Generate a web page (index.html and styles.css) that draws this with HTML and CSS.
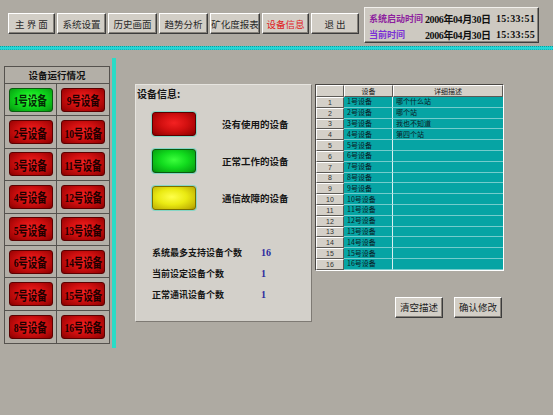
FILE: index.html
```html
<!DOCTYPE html>
<html lang="zh">
<head>
<meta charset="utf-8">
<title>设备信息</title>
<link rel="stylesheet" href="styles.css">
</head>
<body>
<div class="screen">
  <header class="topbar">
    <nav class="menu">
      <button class="mbtn w47">主 界 面</button>
      <button class="mbtn w49">系统设置</button>
      <button class="mbtn w49">历史画面</button>
      <button class="mbtn w49">趋势分析</button>
      <button class="mbtn w50">矿化度报表</button>
      <button class="mbtn w47 active">设备信息</button>
      <button class="mbtn w48">退 出</button>
    </nav>
    <div class="timebox">
      <div class="trow"><span class="tlabel start">系统启动时间</span><span class="tdate">2006年04月30日</span><span class="ttime">15:33:51</span></div>
      <div class="trow"><span class="tlabel now">当前时间</span><span class="tdate">2006年04月30日</span><span class="ttime">15:33:55</span></div>
    </div>
  </header>
  <div class="hline"></div>
  <main class="main">
    <section class="devpanel">
      <div class="devtitle">设备运行情况</div>
      <div class="devgrid">
        <div class="cell"><div class="dev green"><span class="lbl">1号设备</span></div></div>
        <div class="cell"><div class="dev red"><span class="lbl">9号设备</span></div></div>
        <div class="cell"><div class="dev red"><span class="lbl">2号设备</span></div></div>
        <div class="cell"><div class="dev red"><span class="lbl">10号设备</span></div></div>
        <div class="cell"><div class="dev red"><span class="lbl">3号设备</span></div></div>
        <div class="cell"><div class="dev red"><span class="lbl">11号设备</span></div></div>
        <div class="cell"><div class="dev red"><span class="lbl">4号设备</span></div></div>
        <div class="cell"><div class="dev red"><span class="lbl">12号设备</span></div></div>
        <div class="cell"><div class="dev red"><span class="lbl">5号设备</span></div></div>
        <div class="cell"><div class="dev red"><span class="lbl">13号设备</span></div></div>
        <div class="cell"><div class="dev red"><span class="lbl">6号设备</span></div></div>
        <div class="cell"><div class="dev red"><span class="lbl">14号设备</span></div></div>
        <div class="cell"><div class="dev red"><span class="lbl">7号设备</span></div></div>
        <div class="cell"><div class="dev red"><span class="lbl">15号设备</span></div></div>
        <div class="cell"><div class="dev red"><span class="lbl">8号设备</span></div></div>
        <div class="cell"><div class="dev red"><span class="lbl">16号设备</span></div></div>
      </div>
    </section>
    <div class="vline"></div>
    <section class="info">
      <div class="infotitle">设备信息:</div>
      <div class="legend">
        <div class="lrow"><div class="ind red"></div><span class="ltext">没有使用的设备</span></div>
        <div class="lrow"><div class="ind green"></div><span class="ltext">正常工作的设备</span></div>
        <div class="lrow"><div class="ind yellow"></div><span class="ltext">通信故障的设备</span></div>
      </div>
      <div class="stats">
        <div class="srow"><span class="slabel">系统最多支持设备个数</span><span class="sval">16</span></div>
        <div class="srow"><span class="slabel">当前设定设备个数</span><span class="sval">1</span></div>
        <div class="srow"><span class="slabel">正常通讯设备个数</span><span class="sval">1</span></div>
      </div>
    </section>
    <section class="right">
      <div class="tbl">
        <div class="th corner"></div><div class="th">设备</div><div class="th">详细描述</div>
        <div class="rh">1</div><div class="td dcol">1号设备</div><div class="td">哪个什么站</div>
        <div class="rh">2</div><div class="td dcol">2号设备</div><div class="td">哪个站</div>
        <div class="rh">3</div><div class="td dcol">3号设备</div><div class="td">我也不知道</div>
        <div class="rh">4</div><div class="td dcol">4号设备</div><div class="td">第四个站</div>
        <div class="rh">5</div><div class="td dcol">5号设备</div><div class="td"></div>
        <div class="rh">6</div><div class="td dcol">6号设备</div><div class="td"></div>
        <div class="rh">7</div><div class="td dcol">7号设备</div><div class="td"></div>
        <div class="rh">8</div><div class="td dcol">8号设备</div><div class="td"></div>
        <div class="rh">9</div><div class="td dcol">9号设备</div><div class="td"></div>
        <div class="rh">10</div><div class="td dcol">10号设备</div><div class="td"></div>
        <div class="rh">11</div><div class="td dcol">11号设备</div><div class="td"></div>
        <div class="rh">12</div><div class="td dcol">12号设备</div><div class="td"></div>
        <div class="rh">13</div><div class="td dcol">13号设备</div><div class="td"></div>
        <div class="rh">14</div><div class="td dcol">14号设备</div><div class="td"></div>
        <div class="rh">15</div><div class="td dcol">15号设备</div><div class="td"></div>
        <div class="rh">16</div><div class="td dcol">16号设备</div><div class="td"></div>
      </div>
      <div class="actions">
        <button class="abtn">清空描述</button>
        <button class="abtn">确认修改</button>
      </div>
    </section>
  </main>
</div>
</body>
</html>
```
FILE: styles.css
```css
* { box-sizing: border-box; }
html, body { margin: 0; padding: 0; }
body {
  background: #aeaaa2;
  font-family: "Liberation Serif", "Noto Sans CJK SC", serif;
  color: #101010;
}
.screen {
  width: 553px;
  height: 415px;
  overflow: hidden;
  background: #aeaaa2;
}

/* ---------- top bar ---------- */
.topbar {
  height: 46px;
  display: flex;
  align-items: flex-start;
  padding-left: 8px;
}
.menu {
  display: flex;
  gap: 2px;
  margin-top: 13px;
}
.mbtn {
  height: 21px;
  padding: 0;
  font-family: "Noto Sans CJK SC", sans-serif;
  font-size: 9.5px;
  color: #2a2a2a;
  background: #d2cec6;
  border: 1px solid;
  border-color: #ffffff #3c3c3c #3c3c3c #ffffff;
  box-shadow: inset -1px -1px 0 #85817a;
  white-space: nowrap;
}
.mbtn.active { color: #e0201c; }
.w47 { width: 47px; }
.w48 { width: 48px; }
.w49 { width: 49px; }
.w50 { width: 50px; }

.timebox {
  margin-left: 5px;
  margin-top: 7px;
  width: 175px;
  height: 36px;
  background: #cdc9c1;
  border: 1px solid;
  border-color: #f2f0ec #3c3c3c #3c3c3c #f2f0ec;
  box-shadow: inset -1px -1px 0 #85817a;
  padding: 2px 0 0 4px;
}
.trow {
  display: grid;
  grid-template-columns: 56px 71px auto;
  height: 16px;
  align-items: center;
  font-size: 10px;
  font-weight: bold;
  white-space: nowrap;
}
.tlabel { font-family: "Noto Sans CJK SC", sans-serif; font-size: 9px; }
.tlabel.start { color: #8d1f9e; }
.tlabel.now { color: #7a2fd6; }
.tdate { letter-spacing: -0.4px; }
.ttime { letter-spacing: 0.3px; }

.hline {
  height: 4px;
  background: #24d6d6;
  border-top: 1px dotted #0e9a9a;
  border-bottom: 1px dotted #18b0b0;
}

/* ---------- main ---------- */
.main {
  display: flex;
  align-items: flex-start;
  padding-left: 4px;
}

.devpanel {
  width: 106px;
  margin-top: 16px;
  border: 1px solid #55524e;
  background: #b3afa7;
}
.devtitle {
  height: 17px;
  line-height: 16px;
  border-bottom: 1px solid #55524e;
  text-align: center;
  font-family: "Noto Sans CJK SC", sans-serif;
  font-weight: bold;
  font-size: 9.5px;
  color: #111;
}
.devgrid {
  display: grid;
  grid-template-columns: 52px 52px;
  grid-auto-rows: 32.4px;
}
.cell {
  display: flex;
  align-items: center;
  justify-content: center;
  border-bottom: 1px solid #55524e;
}
.cell:nth-child(odd) { border-right: 1px solid #55524e; }
.cell:nth-last-child(-n+2) { border-bottom: none; }

.dev {
  width: 44px;
  height: 24px;
  border-radius: 3px;
  display: flex;
  align-items: center;
  justify-content: center;
  overflow: hidden;
}
.lbl {
  display: inline-block;
  font-size: 13px;
  font-weight: bold;
  white-space: nowrap;
  transform: scaleX(0.74);
  letter-spacing: -0.3px;
}
.red {
  background: radial-gradient(ellipse at 50% 45%, #f42222 0%, #d21010 45%, #a00404 85%, #780000 100%);
  border: 1px solid #5a0000;
  color: #1e0000;
}
.green {
  background: radial-gradient(ellipse at 50% 45%, #3cff3c 0%, #12dc1e 45%, #07a812 85%, #057a0c 100%);
  border: 1px solid #0a5a10;
  color: #042a06;
}
.yellow {
  background: radial-gradient(ellipse at 45% 45%, #ffff4a 0%, #eaea12 45%, #c2b404 85%, #9a8a00 100%);
  border: 1px solid #7a6e00;
}

.vline {
  width: 4px;
  height: 290px;
  margin-left: 2px;
  margin-top: 8px;
  background: #2adcc6;
}

/* ---------- info panel ---------- */
.info {
  width: 177px;
  height: 238px;
  margin-left: 19px;
  margin-top: 34px;
  background: #d3d0ca;
  border: 1px solid;
  border-color: #e6e4df #7e7a74 #7e7a74 #e6e4df;
  padding: 2px 0 0 1px;
  font-family: "Noto Sans CJK SC", sans-serif;
  font-weight: bold;
  color: #161616;
}
.infotitle {
  font-size: 10px;
  line-height: 14px;
}
.legend {
  margin-top: 11px;
  margin-left: 15px;
  display: flex;
  flex-direction: column;
  gap: 13px;
}
.lrow {
  display: flex;
  align-items: center;
  height: 24px;
}
.ind {
  width: 44px;
  height: 24px;
  border-radius: 3px;
  box-shadow: 0 0 0 1px #86d6c6;
}
.ltext {
  margin-left: 26px;
  font-size: 9.5px;
}
.stats {
  margin-top: 32px;
  margin-left: 15px;
}
.srow {
  display: flex;
  align-items: center;
  height: 21px;
}
.slabel {
  width: 109px;
  font-size: 9px;
}
.sval {
  font-family: "Liberation Serif", serif;
  font-size: 10px;
  color: #2a2a9e;
}

/* ---------- table ---------- */
.right {
  margin-left: 3px;
  margin-top: 34px;
}
.tbl {
  width: 189px;
  display: grid;
  grid-template-columns: 28px 49px 110px;
  grid-template-rows: 12px;
  grid-auto-rows: 10.8px;
  border: 1px solid;
  border-color: #4a4743 #ffffff #ffffff #4a4743;
  background: #00a6a6;
  font-family: "Noto Sans CJK SC", sans-serif;
  font-size: 7px;
}
.th {
  background: #d4d0c8;
  border-right: 1px solid #5c5a56;
  border-bottom: 1px solid #5c5a56;
  border-top: 1px solid #ffffff;
  border-left: 1px solid #ffffff;
  display: flex;
  align-items: center;
  justify-content: center;
  color: #222;
  line-height: 1;
}
.rh {
  background: #d4d0c8;
  border-right: 1px solid #5c5a56;
  border-bottom: 1px solid #5c5a56;
  border-top: 1px solid #ffffff;
  border-left: 1px solid #ffffff;
  display: flex;
  align-items: center;
  justify-content: center;
  font-family: "Liberation Sans", sans-serif;
  font-size: 7px;
  color: #333;
  line-height: 1;
}
.td {
  background: #06a4a4;
  border-bottom: 1px solid #74cccc;
  display: flex;
  align-items: center;
  padding-left: 3px;
  color: #0a1a24;
  line-height: 1;
  white-space: nowrap;
}
.dcol { border-right: 1px solid #d8f0f0; }

.actions {
  display: flex;
  gap: 11px;
  margin-top: 26px;
  padding-left: 80px;
}
.abtn {
  width: 48px;
  height: 21px;
  padding: 0;
  font-family: "Noto Sans CJK SC", sans-serif;
  font-size: 9.5px;
  color: #222;
  background: #d2cec6;
  border: 1px solid;
  border-color: #ffffff #3c3c3c #3c3c3c #ffffff;
  box-shadow: inset -1px -1px 0 #85817a;
}
```
